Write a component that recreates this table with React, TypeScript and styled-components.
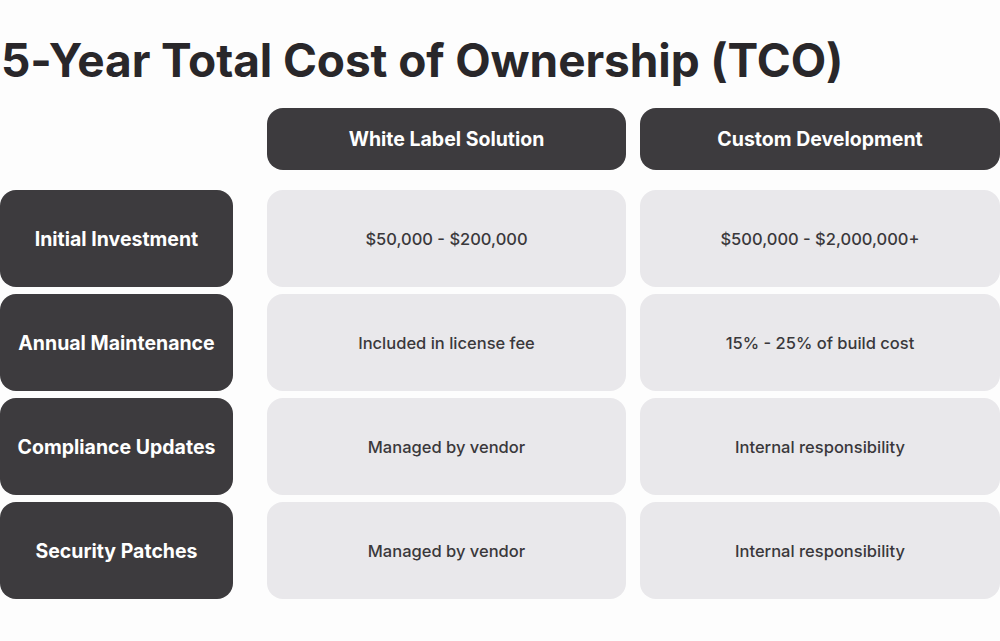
import React from "react";
import styled, { createGlobalStyle } from "styled-components";

const GlobalStyle = createGlobalStyle`
	html, body {
		margin: 0;
		padding: 0;
		background: #fdfdfd;
	}
	body {
		font-family: Inter, "Noto Sans", "Liberation Sans", sans-serif;
		color: #2a282b;
	}
`;

const columns = ["White Label Solution", "Custom Development"];

const rows = [
	{ label: "Initial Investment", values: ["$50,000 - $200,000", "$500,000 - $2,000,000+"] },
	{ label: "Annual Maintenance", values: ["Included in license fee", "15% - 25% of build cost"] },
	{ label: "Compliance Updates", values: ["Managed by vendor", "Internal responsibility"] },
	{ label: "Security Patches", values: ["Managed by vendor", "Internal responsibility"] },
];

function App() {
	return (
		<Page>
			<GlobalStyle />
			<Title>5-Year Total Cost of Ownership (TCO)</Title>
			<Table>
				<HeaderRow>
					<Spacer />
					<Cells>
						{columns.map((c) => (
							<Cell key={c} $dark $header>
								{c}
							</Cell>
						))}
					</Cells>
				</HeaderRow>
				{rows.map((r) => (
					<Row key={r.label}>
						<Label>{r.label}</Label>
						<Cells>
							{r.values.map((v, i) => (
								<Cell key={i}>{v}</Cell>
							))}
						</Cells>
					</Row>
				))}
			</Table>
		</Page>
	);
}

const Page = styled.div`
	width: 1000px;
	height: 641px;
	overflow: hidden;
	padding-top: 30px;
	box-sizing: border-box;
`;

const Title = styled.h1`
	margin: 0 0 0 1px;
	font-size: 46px;
	font-weight: 700;
	letter-spacing: -0.1px;
	line-height: 60px;
	color: #29272a;
`;

const Table = styled.div`
	margin-top: 18px;
	display: flex;
	flex-direction: column;
	gap: 7px;
`;

const HeaderRow = styled.div`
	display: flex;
	height: 62px;
	margin-bottom: 13px;
`;

const Row = styled.div`
	display: flex;
	height: 97px;
`;

const Spacer = styled.div`
	width: 233px;
	flex: none;
`;

const Label = styled.div`
	width: 233px;
	flex: none;
	background: #3d3b3e;
	color: #ffffff;
	border-radius: 16px;
	display: flex;
	align-items: center;
	justify-content: center;
	font-size: 19.5px;
	font-weight: 700;
`;

const Cells = styled.div`
	flex: 1;
	margin-left: 34px;
	display: grid;
	grid-template-columns: 359px 1fr;
	gap: 14px;
`;

const Cell = styled.div<{ $dark?: boolean; $header?: boolean }>`
	background: ${(p) => (p.$dark ? "#3d3b3e" : "#e9e8eb")};
	color: ${(p) => (p.$dark ? "#ffffff" : "#3a383b")};
	border-radius: 16px;
	display: flex;
	align-items: center;
	justify-content: center;
	font-size: ${(p) => (p.$header ? "19.5px" : "16.5px")};
	font-weight: ${(p) => (p.$header ? 700 : 500)};
`;

export default App;
